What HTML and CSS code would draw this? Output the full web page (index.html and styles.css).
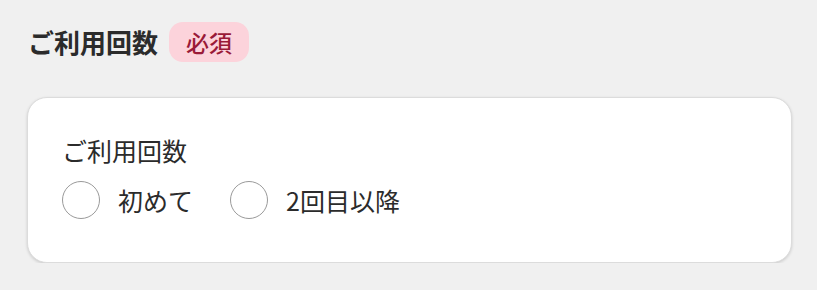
FILE: index.html
```html
<!DOCTYPE html>
<html lang="ja">
<head>
<meta charset="utf-8">
<link rel="stylesheet" href="styles.css">
</head>
<body>
<div class="page">
  <div class="heading">
    <h2 class="title">ご利用回数</h2>
    <span class="badge">必須</span>
  </div>
  <div class="card">
    <div class="label">ご利用回数</div>
    <div class="options">
      <label class="option"><span class="radio"></span><span class="option-text">初めて</span></label>
      <label class="option"><span class="radio"></span><span class="option-text">2回目以降</span></label>
    </div>
  </div>
</div>
</body>
</html>
```

FILE: styles.css
```css
html, body {
  margin: 0;
  padding: 0;
  background: #f0f0f0;
}
body {
  font-family: "Noto Sans CJK JP", "Noto Sans", sans-serif;
  color: #2b2b2b;
}
.page {
  padding: 22px 25px 0 27px;
}
.heading {
  display: flex;
  align-items: center;
  gap: 11px;
  height: 40px;
  padding-left: 1px;
}
.title {
  margin: 0;
  font-size: 26px;
  font-weight: 700;
  line-height: 36px;
  color: #2b2b2b;
}
.badge {
  display: inline-flex;
  align-items: center;
  justify-content: center;
  height: 40px;
  padding: 0 17px;
  border-radius: 14px;
  background: #fcd3db;
  color: #9a1a38;
  font-size: 23px;
  font-weight: 500;
  line-height: 1;
}
.card {
  margin-top: 35px;
  width: 763px;
  height: 164px;
  background: #fff;
  border: 1px solid #dcdcdc;
  border-radius: 20px;
  box-shadow: 0 1px 3px rgba(0,0,0,0.15);
}
.label {
  padding: 37px 0 0 34px;
  font-size: 25px;
  line-height: 30px;
  color: #2b2b2b;
}
.options {
  display: flex;
  align-items: center;
  gap: 37px;
  margin-top: 16px;
  padding-left: 34px;
}
.option {
  display: flex;
  align-items: center;
  gap: 18px;
}
.radio {
  width: 36px;
  height: 36px;
  border: 1px solid #9a9a9a;
  border-radius: 50%;
  background: #fff;
}
.option-text {
  font-size: 25px;
  line-height: 38px;
  color: #2b2b2b;
}
```
